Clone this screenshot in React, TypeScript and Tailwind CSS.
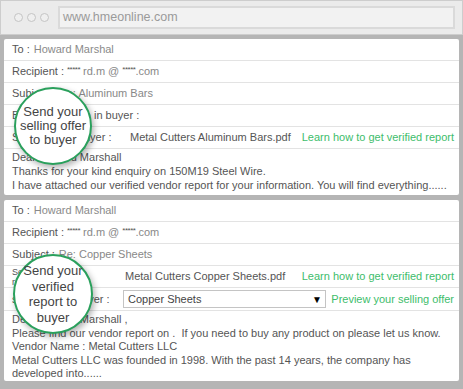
import type { ReactNode } from 'react';

function Row({ children, h = 'h-[22px]' }: { children: ReactNode; h?: string }) {
  return (
    <div className={`flex ${h} shrink-0 items-center whitespace-nowrap border-b border-[#e3e3e3] pl-[8px] pr-[5px] text-[11px] text-[#555]`}>
      {children}
    </div>
  );
}

function Stars() {
  return <span className="relative top-[-2px] text-[8px] tracking-[-0.5px]">*****</span>;
}

function Bubble({ lines, className }: { lines: string[]; className: string }) {
  return (
    <div
      className={`absolute flex flex-col items-center justify-center rounded-full border-[2px] border-[#2aa05c] bg-white text-center text-[13px] whitespace-nowrap text-[#444] shadow-[2px_3px_6px_rgba(0,0,0,0.3)] ${className}`}
    >
      {lines.map((l) => (
        <span key={l}>{l}</span>
      ))}
    </div>
  );
}

export default function App() {
  return (
    <div className="relative flex h-[389px] w-[463px] flex-col overflow-hidden bg-[#b5b5b5] font-['Liberation_Sans',Arial,sans-serif]">
      {/* browser bar */}
      <div className="flex h-[35px] shrink-0 items-center border border-[#cdcdcd] bg-[#ebebeb] pl-[13px] pr-[7px]">
        <div className="flex gap-[4px]">
          <span className="h-[9px] w-[9px] rounded-full border border-[#c4c4c4] bg-[#efefef]" />
          <span className="h-[9px] w-[9px] rounded-full border border-[#c4c4c4] bg-[#efefef]" />
          <span className="h-[9px] w-[9px] rounded-full border border-[#c4c4c4] bg-[#efefef]" />
        </div>
        <div className="ml-[9px] flex h-[23px] flex-1 items-center border-[2px] border-[#dadada] bg-[#f2f2f2] pl-[3px] text-[12.5px] text-[#9a9a9a]">
          www.hmeonline.com
        </div>
      </div>

      {/* first mail */}
      <div className="mx-[4px] mt-[4px] flex h-[156px] shrink-0 flex-col rounded-[2px] bg-white">
        <Row>
          <span>To :</span>
          <span className="ml-[4px] text-[#8a8a8a]">Howard Marshal</span>
        </Row>
        <Row>
          <span className="mr-[3px]">Recipient :</span>
          <Stars />
          <span className="ml-[3px] text-[#888]">rd.m @&nbsp;</span>
          <Stars />
          <span className="text-[#888]">.com</span>
        </Row>
        <Row>
          <span>Subject :</span>
          <span className="ml-[4px] text-[#888]">Re: Aluminum Bars</span>
        </Row>
        <Row>
          <span>Branding shown in buyer :</span>
        </Row>
        <Row>
          <span className="w-[118px] shrink-0 overflow-hidden">Send offer to buyer :</span>
          <span>Metal Cutters Aluminum Bars.pdf</span>
          <span className="ml-auto text-[#40bd6b]">Learn how to get verified report</span>
        </Row>
        <div className="whitespace-nowrap pl-[8px] pt-[1px] text-[11px] leading-[14px] text-[#555]">
          <p>Dear Howard Marshall</p>
          <p>Thanks for your kind enquiry on 150M19 Steel Wire.</p>
          <p>I have attached our verified vendor report for your information. You will find everything......</p>
        </div>
      </div>

      {/* second mail */}
      <div className="mx-[4px] mt-[5px] flex h-[181px] shrink-0 flex-col rounded-[2px] bg-white">
        <Row>
          <span>To :</span>
          <span className="ml-[4px] text-[#8a8a8a]">Howard Marshall</span>
        </Row>
        <Row>
          <span className="mr-[3px]">Recipient :</span>
          <Stars />
          <span className="ml-[3px] text-[#888]">rd.m @&nbsp;</span>
          <Stars />
          <span className="text-[#888]">.com</span>
        </Row>
        <Row>
          <span>Subject :</span>
          <span className="ml-[4px] text-[#888]">Re: Copper Sheets</span>
        </Row>
        <Row>
          <span className="flex w-[113px] shrink-0 flex-col text-[9px] leading-[10px]">
            <span>Send verified</span>
            <span>report to buyer :</span>
          </span>
          <span>Metal Cutters Copper Sheets.pdf</span>
          <span className="ml-auto text-[#40bd6b]">Learn how to get verified report</span>
        </Row>
        <Row h="h-[23px]">
          <span className="w-[111px] shrink-0 overflow-hidden">send offer to buyer :</span>
          <div className="flex h-[18px] w-[203px] items-center border border-[#c4c4c4] pl-[4px] pr-[3px] text-[11px] text-[#444]">
            <span>Copper Sheets</span>
            <span className="ml-auto text-[10px] text-black">▼</span>
          </div>
          <span className="ml-auto text-[#40bd6b]">Preview your selling offer</span>
        </Row>
        <div className="whitespace-nowrap pl-[8px] pt-[2px] text-[11px] leading-[13.5px] text-[#555]">
          <p>Dear Howard Marshall ,</p>
          <p>Please find our vendor report on .&nbsp; If you need to buy any product on please let us know.</p>
          <p>Vendor Name : Metal Cutters LLC</p>
          <p>Metal Cutters LLC was founded in 1998. With the past 14 years, the company has</p>
          <p>developed into......</p>
        </div>
      </div>

      <Bubble lines={['Send your', 'selling offer', 'to buyer']} className="left-[14px] top-[87px] h-[78px] w-[78px] leading-[14px]" />
      <Bubble lines={['Send your', 'verified', 'report to', 'buyer']} className="left-[13px] top-[254px] h-[80px] w-[80px] leading-[15.5px]" />
    </div>
  );
}
